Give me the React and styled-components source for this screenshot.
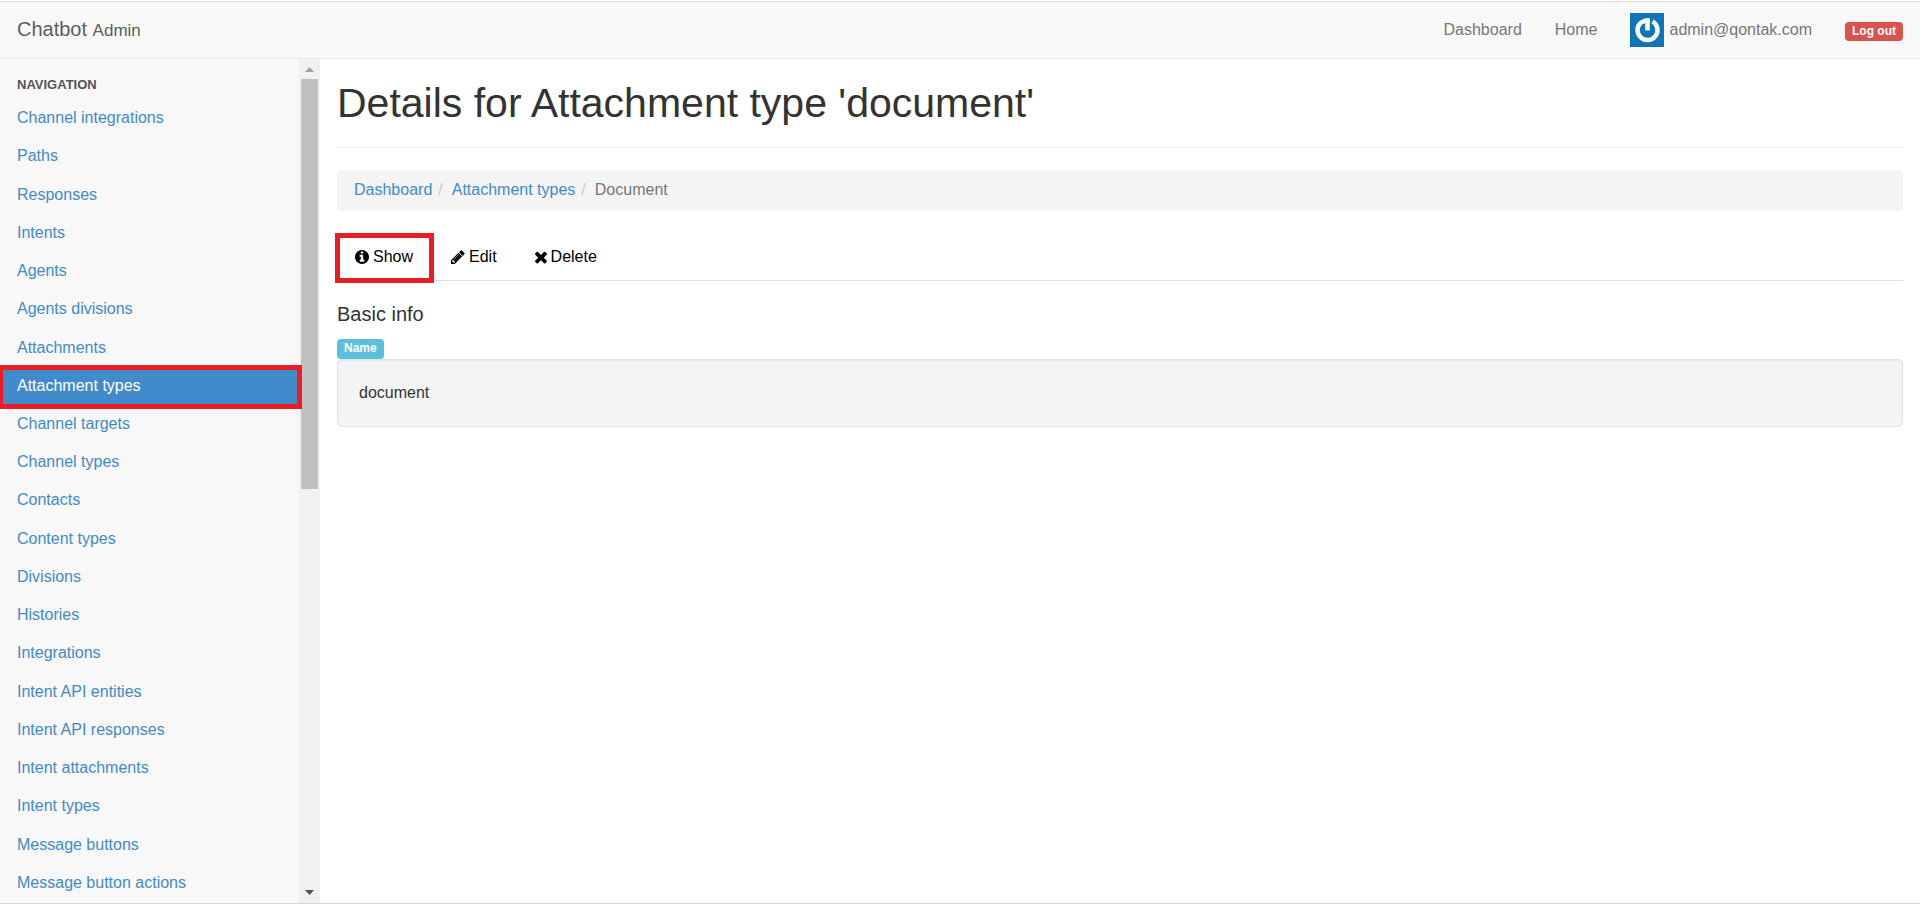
import React from "react";
import styled, { createGlobalStyle, css } from "styled-components";

const GlobalStyle = createGlobalStyle`
  * { box-sizing: border-box; }
  body {
    margin: 0;
    background: #fff;
    color: #333;
    font: 16px/22px "Liberation Sans", Arial, sans-serif;
  }
  a { color: #428bca; text-decoration: none; }
  ul, ol, dl, dd, h1, h2 { margin: 0; padding: 0; list-style: none; font-weight: normal; }
`;

const Page = styled.div`
  display: flex;
  flex-direction: column;
  height: 100vh;
  border-bottom: 1px solid #d9dac2;
`;

const Navbar = styled.header`
  display: flex;
  align-items: center;
  justify-content: space-between;
  flex: none;
  height: 59px;
  padding: 2px 17px 0;
  background: #f8f8f8;
  border-bottom: 1px solid #e7e7e7;
  box-shadow: inset 0 1px #fff, inset 0 2px #ddd;
`;

const Brand = styled.a`
  color: #5e5e5e;
  font-size: 20px;

  small { font-size: 17px; }
`;

const UserNav = styled.nav`
  display: flex;
  align-items: center;
  gap: 33px;
`;

const UserLink = styled.a`
  display: flex;
  align-items: center;
  gap: 5px;
  color: #777;
`;

const Avatar = styled.svg`
  display: block;
  width: 34px;
  height: 34px;
`;

const Tag = styled.span`
  display: block;
  width: fit-content;
  padding: 0 7px;
  border-radius: 4px;
  background: ${(p) => p.$color};
  color: #fff;
  font-size: 12px;
  font-weight: bold;
  line-height: ${(p) => p.$line};
  ${(p) => p.$tall && css`padding-bottom: 2px;`}
`;

const LogoutLink = styled.a`
  padding-top: 2px;
`;

const Body = styled.div`
  display: grid;
  grid-template-columns: 2fr 10fr;
  flex: 1;
  min-height: 0;
`;

const Sidebar = styled.aside`
  display: grid;
  grid-template-columns: 1fr 21px;
  grid-template-rows: 100%;
  min-width: 0;
  min-height: 0;
  background: #f8f8f8;
`;

const SidebarScroll = styled.nav`
  display: flex;
  flex-direction: column;
  grid-area: 1 / 1 / 2 / 3;
  z-index: 1;
  padding: 0 21px 2px 0;
  overflow-y: auto;
  scrollbar-width: none;
`;

const SidebarTitle = styled.h2`
  padding: 16px 17px 3px;
  color: #555;
  font-size: 13px;
  font-weight: bold;
  line-height: 20px;
  text-transform: uppercase;
`;

const SidebarList = styled.ul`
  display: grid;
  grid-auto-rows: minmax(38px, 1fr);
  flex: 1;
`;

const redFrame = css`
  position: relative;

  &::after {
    content: "";
    position: absolute;
    border: 5px solid #ed1c24;
    pointer-events: none;
  }
`;

const SidebarLink = styled.a`
  display: flex;
  align-items: center;
  height: 100%;
  padding: 2px 17px 0;

  ${(p) => p.$active && css`
    ${redFrame}
    background: #428bca;
    color: #fff;

    &::after {
      inset: -1px -3px -5px 0;
      border-left-width: 3px;
    }
  `}
`;

const Scrollbar = styled.div`
  display: flex;
  flex-direction: column;
  align-items: center;
  grid-area: 1 / 2;
  background: #f1f1f1;
`;

const ScrollArrow = styled.svg`
  flex: none;
  width: 21px;
  height: 20px;
  fill: ${(p) => p.$fill};
`;

const ScrollTrack = styled.div`
  flex: 1;
  width: 17px;
`;

const ScrollThumb = styled.div`
  height: 51%;
  background: #c1c1c1;
`;

const Main = styled.main`
  min-width: 0;
  padding: 22px 17px 0;
  overflow: auto;
`;

const Title = styled.h1`
  padding-bottom: 21px;
  border-bottom: 1px solid #eee;
  font-size: 41px;
  line-height: 45px;
`;

const Breadcrumb = styled.ol`
  display: flex;
  margin: 22px 0;
  padding: 9px 17px 10px;
  border-radius: 5px;
  background: #f4f4f4;
  color: #777;

  li + li::before {
    content: "/";
    padding: 0 9px 0 6px;
    color: #ccc;
  }
`;

const Tabs = styled.ul`
  display: flex;
  gap: 2px;
  height: 48px;
  border-bottom: 1px solid #ddd;
`;

const TabLink = styled.a`
  display: flex;
  align-items: center;
  gap: 4px;
  height: 47px;
  padding: 0 18px;
  color: #000;

  ${(p) => p.$active && css`
    ${redFrame}
    &::after { inset: 0 -3px -3px -2px; }
  `}
`;

const TabIcon = styled.svg`
  display: block;
  width: ${(p) => p.$width};
  height: 14px;
  fill: currentColor;
`;

const Section = styled.section`
  padding-top: 22px;
`;

const SectionTitle = styled.h2`
  margin-bottom: 14px;
  font-size: 20px;
`;

const Well = styled.dd`
  padding: 22px 21px;
  border: 1px solid #e3e3e3;
  border-radius: 5px;
  background: #f4f4f4;
  box-shadow: inset 0 1px 1px rgba(0, 0, 0, 0.05);
`;

const NAV_ITEMS = [
  "Channel integrations", "Paths", "Responses", "Intents", "Agents",
  "Agents divisions", "Attachments", "Attachment types", "Channel targets",
  "Channel types", "Contacts", "Content types", "Divisions", "Histories",
  "Integrations", "Intent API entities", "Intent API responses",
  "Intent attachments", "Intent types", "Message buttons",
  "Message button actions",
];

const TABS = [
  {
    label: "Show",
    width: "14px",
    box: "128 128 1536 1536",
    path: "M1152 1376v-160q0-14-9-23t-23-9h-96v-512q0-14-9-23t-23-9h-320q-14 0-23 9t-9 23v160q0 14 9 23t23 9h96v320h-96q-14 0-23 9t-9 23v160q0 14 9 23t23 9h448q14 0 23-9t9-23zm-128-896v-160q0-14-9-23t-23-9h-192q-14 0-23 9t-9 23v160q0 14 9 23t23 9h192q14 0 23-9t9-23zm640 416q0 209-103 385.5t-279.5 279.5-385.5 103-385.5-103-279.5-279.5-103-385.5 103-385.5 279.5-279.5 385.5-103 385.5 103 279.5 279.5 103 385.5z",
  },
  {
    label: "Edit",
    width: "14px",
    box: "128 110 1560 1560",
    path: "M491 1536l91-91-235-235-91 91v107h128v128h107zm523-928q0-22-22-22-10 0-17 7l-542 542q-7 7-7 17 0 22 22 22 10 0 17-7l542-542q7-7 7-17zm-54-192l416 416-832 832h-416v-416zm683 96q0 53-37 90l-166 166-416-416 166-165q36-38 90-38 53 0 91 38l235 234q37 39 37 91z",
  },
  {
    label: "Delete",
    width: "12px",
    box: "296 246 1200 1300",
    path: "M1490 1322q0 40-28 68l-136 136q-28 28-68 28t-68-28l-294-294-294 294q-28 28-68 28t-68-28l-136-136q-28-28-28-68t28-68l294-294-294-294q-28-28-28-68t28-68l136-136q28-28 68-28t68 28l294 294 294-294q28-28 68-28t68 28l136 136q28 28 28 68t-28 68l-294 294 294 294q28 28 28 68z",
  },
];

export default function App() {
  return (
    <>
      <GlobalStyle />
      <Page>
        <Navbar>
          <Brand href="#">Chatbot <small>Admin</small></Brand>
          <UserNav>
            <UserLink href="#">Dashboard</UserLink>
            <UserLink href="#">Home</UserLink>
            <UserLink href="#">
              <Avatar viewBox="0 0 34 34" aria-hidden="true">
                <rect width="34" height="34" fill="#0d76b9" />
                <path
                  d="M11 9.500A10 10 0 1 0 22.500 8.400M17.500 6v11.500"
                  fill="none"
                  stroke="#fff"
                  strokeWidth="4.500"
                />
                <path d="M9 9Q12.500 4.800 19.700 5V9L12.500 11Z" fill="#fff" />
              </Avatar>
              admin@qontak.com
            </UserLink>
            <LogoutLink href="#">
              <Tag $color="#d9534f" $line="19px">Log out</Tag>
            </LogoutLink>
          </UserNav>
        </Navbar>
        <Body>
          <Sidebar>
            <SidebarScroll>
              <SidebarTitle>Navigation</SidebarTitle>
              <SidebarList>
                {NAV_ITEMS.map((item) => (
                  <li key={item}>
                    <SidebarLink href="#" $active={item === "Attachment types"}>
                      {item}
                    </SidebarLink>
                  </li>
                ))}
              </SidebarList>
            </SidebarScroll>
            <Scrollbar aria-hidden="true">
              <ScrollArrow viewBox="0 0 21 20" $fill="#a3a3a3">
                <path d="M6 13L10.500 8L15 13Z" />
              </ScrollArrow>
              <ScrollTrack><ScrollThumb /></ScrollTrack>
              <ScrollArrow viewBox="0 0 21 20" $fill="#505050">
                <path d="M6 7L10.500 12L15 7Z" />
              </ScrollArrow>
            </Scrollbar>
          </Sidebar>
          <Main>
            <Title>Details for Attachment type 'document'</Title>
            <Breadcrumb>
              <li><a href="#">Dashboard</a></li>
              <li><a href="#">Attachment types</a></li>
              <li>Document</li>
            </Breadcrumb>
            <Tabs>
              {TABS.map((tab) => (
                <li key={tab.label}>
                  <TabLink href="#" $active={tab.label === "Show"}>
                    <TabIcon viewBox={tab.box} $width={tab.width} aria-hidden="true">
                      <path d={tab.path} />
                    </TabIcon>
                    {tab.label}
                  </TabLink>
                </li>
              ))}
            </Tabs>
            <Section>
              <SectionTitle>Basic info</SectionTitle>
              <dl>
                <dt><Tag $color="#5bc0de" $line="18px" $tall>Name</Tag></dt>
                <Well>document</Well>
              </dl>
            </Section>
          </Main>
        </Body>
      </Page>
    </>
  );
}
